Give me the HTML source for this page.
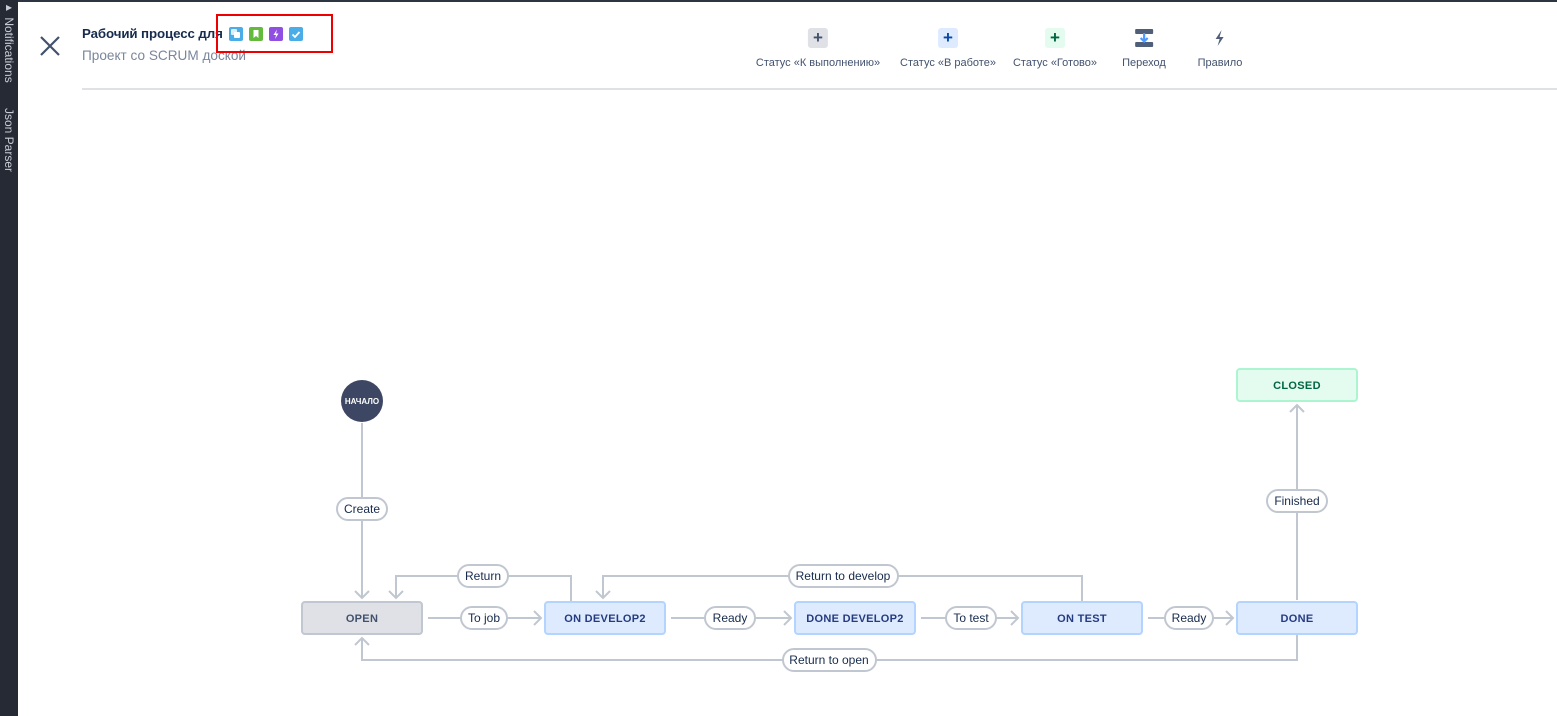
<!DOCTYPE html>
<html><head><meta charset="utf-8"><style>
body{margin:0;width:1557px;height:716px;overflow:hidden;background:#fff;font-family:"Liberation Sans","Noto Sans CJK SC",sans-serif;position:relative}
.side{position:absolute;left:0;top:0;width:18px;height:716px;background:#252a35}
.side span{position:absolute;left:2px;color:#c8ccd4;font-size:12px;writing-mode:vertical-rl;white-space:nowrap}
.topl{position:absolute;left:18px;top:0;right:0;height:2px;background:#2d3442}
.t{position:absolute;left:82px;top:26px;font-size:13.3px;color:#172b4d;font-weight:bold;letter-spacing:-0.1px}
.s{position:absolute;left:82px;top:48px;font-size:13.6px;color:#7a869a}
.hr{position:absolute;left:82px;top:88px;right:0;height:2px;background:#dfe1e6}
.red{position:absolute;left:216px;top:14px;width:113px;height:35px;border:2px solid #e00}
.ic{position:absolute;top:27px;width:14px;height:14px;border-radius:2px}
.tb{position:absolute;top:28px;text-align:center;font-size:11px;color:#42526e;transform:translateX(-50%);white-space:nowrap}
.tb .b{width:20px;height:20px;margin:0 auto 9px;border-radius:3px;font-weight:bold;font-size:17px;line-height:20px}
</style></head><body>
<div class="side"><span style="top:0">▸ Notifications</span><span style="top:108px">Json Parser</span></div>
<div class="topl"></div>
<svg style="position:absolute;left:38px;top:34px" width="24" height="24"><path d="M3 3L21 21M21 3L3 21" stroke="#42526e" stroke-width="2.2"/></svg>
<div class="t">Рабочий процесс для</div>
<div class="s">Проект со SCRUM доской</div>
<div class="red"></div>
<div class="ic" style="left:229px;background:#4bade8"></div>
<div class="ic" style="left:249px;background:#63ba3c"><svg width="14" height="14"><path d="M4.5 3h5v8l-2.5-2-2.5 2z" fill="#fff"/></svg></div>
<div class="ic" style="left:269px;background:#904ee2"><svg width="14" height="14"><path d="M8 2.5L4.5 8h2.5l-1 4 3.5-5.5h-2.5z" fill="#fff"/></svg></div>
<div class="ic" style="left:289px;background:#4bade8"><svg width="14" height="14"><path d="M3.5 7.5l2.5 2.5 4.5-5" stroke="#fff" stroke-width="1.8" fill="none"/></svg></div>
<svg style="position:absolute;left:231px;top:29px" width="10" height="10"><rect x="0" y="0" width="6" height="6" rx="1" fill="#fff" opacity=".8"/><rect x="3" y="3" width="6" height="6" rx="1" fill="#fff"/></svg>
<div class="hr"></div>
<div class="tb" style="left:818px"><div class="b" style="background:#dfe1e6;color:#42526e">+</div>Статус «К выполнению»</div>
<div class="tb" style="left:948px"><div class="b" style="background:#deebff;color:#0747a6">+</div>Статус «В работе»</div>
<div class="tb" style="left:1055px"><div class="b" style="background:#e3fcef;color:#006644">+</div>Статус «Готово»</div>
<div class="tb" style="left:1144px"><div class="b"><svg width="20" height="20"><rect x="1" y="1" width="18" height="5" rx="1" fill="#505f79"/><rect x="1" y="14" width="18" height="5" rx="1" fill="#505f79"/><path d="M10 5v8M6.5 10l3.5 3.5 3.5-3.5" stroke="#4c9aff" stroke-width="2.2" fill="none"/></svg></div>Переход</div>
<div class="tb" style="left:1220px"><div class="b"><svg width="20" height="20"><path d="M12 2L6 11h4l-2 7 6-9h-4z" fill="#505f79"/></svg></div>Правило</div>
<svg style="position:absolute;left:0;top:0" width="1557" height="716" font-family="Liberation Sans,sans-serif">
<g stroke="#c1c7d0" stroke-width="2" fill="none">
<path d="M362 423V598M355 591l7 7 7-7"/>
<path d="M571 602V576H396V598M389 591l7 7 7-7"/>
<path d="M1082 602V576H603V598M596 591l7 7 7-7"/>
<path d="M1297 634V660H362V638M355 645l7-7 7 7"/>
<path d="M428 618H541M534 611l7 7-7 7"/>
<path d="M671 618H791M784 611l7 7-7 7"/>
<path d="M921 618H1018M1011 611l7 7-7 7"/>
<path d="M1148 618H1233M1226 611l7 7-7 7"/>
<path d="M1297 600V405M1290 412l7-7 7 7"/>
</g>
<circle cx="362" cy="401" r="21" fill="#3d4763"/>
<text x="362" y="404" fill="#fff" font-size="8" font-weight="bold" text-anchor="middle">НАЧАЛО</text>
<g font-size="11" font-weight="bold" text-anchor="middle" letter-spacing=".3">
<rect x="302" y="602" width="120" height="32" rx="3" fill="#dfe1e6" stroke="#c1c7d0" stroke-width="2"/><text x="362" y="622" fill="#42526e">OPEN</text>
<rect x="545" y="602" width="120" height="32" rx="3" fill="#deebff" stroke="#b3d4ff" stroke-width="2"/><text x="605" y="622" fill="#253b80">ON DEVELOP2</text>
<rect x="795" y="602" width="120" height="32" rx="3" fill="#deebff" stroke="#b3d4ff" stroke-width="2"/><text x="855" y="622" fill="#253b80">DONE DEVELOP2</text>
<rect x="1022" y="602" width="120" height="32" rx="3" fill="#deebff" stroke="#b3d4ff" stroke-width="2"/><text x="1082" y="622" fill="#253b80">ON TEST</text>
<rect x="1237" y="602" width="120" height="32" rx="3" fill="#deebff" stroke="#b3d4ff" stroke-width="2"/><text x="1297" y="622" fill="#253b80">DONE</text>
<rect x="1237" y="369" width="120" height="32" rx="3" fill="#e3fcef" stroke="#abf5d1" stroke-width="2"/><text x="1297" y="389" fill="#006644">CLOSED</text>
</g>
<g font-size="12" text-anchor="middle" fill="#172b4d">
<rect x="337" y="498" width="50" height="22" rx="11" fill="#fff" stroke="#c1c7d0" stroke-width="2"/><text x="362" y="513">Create</text>
<rect x="458" y="565" width="50" height="22" rx="11" fill="#fff" stroke="#c1c7d0" stroke-width="2"/><text x="483" y="580">Return</text>
<rect x="461" y="607" width="46" height="22" rx="11" fill="#fff" stroke="#c1c7d0" stroke-width="2"/><text x="484" y="622">To job</text>
<rect x="705" y="607" width="50" height="22" rx="11" fill="#fff" stroke="#c1c7d0" stroke-width="2"/><text x="730" y="622">Ready</text>
<rect x="946" y="607" width="50" height="22" rx="11" fill="#fff" stroke="#c1c7d0" stroke-width="2"/><text x="971" y="622">To test</text>
<rect x="1165" y="607" width="48" height="22" rx="11" fill="#fff" stroke="#c1c7d0" stroke-width="2"/><text x="1189" y="622">Ready</text>
<rect x="789" y="565" width="109" height="22" rx="11" fill="#fff" stroke="#c1c7d0" stroke-width="2"/><text x="843" y="580">Return to develop</text>
<rect x="783" y="649" width="93" height="22" rx="11" fill="#fff" stroke="#c1c7d0" stroke-width="2"/><text x="829" y="664">Return to open</text>
<rect x="1267" y="490" width="60" height="22" rx="11" fill="#fff" stroke="#c1c7d0" stroke-width="2"/><text x="1297" y="505">Finished</text>
</g>
</svg>
</body></html>
